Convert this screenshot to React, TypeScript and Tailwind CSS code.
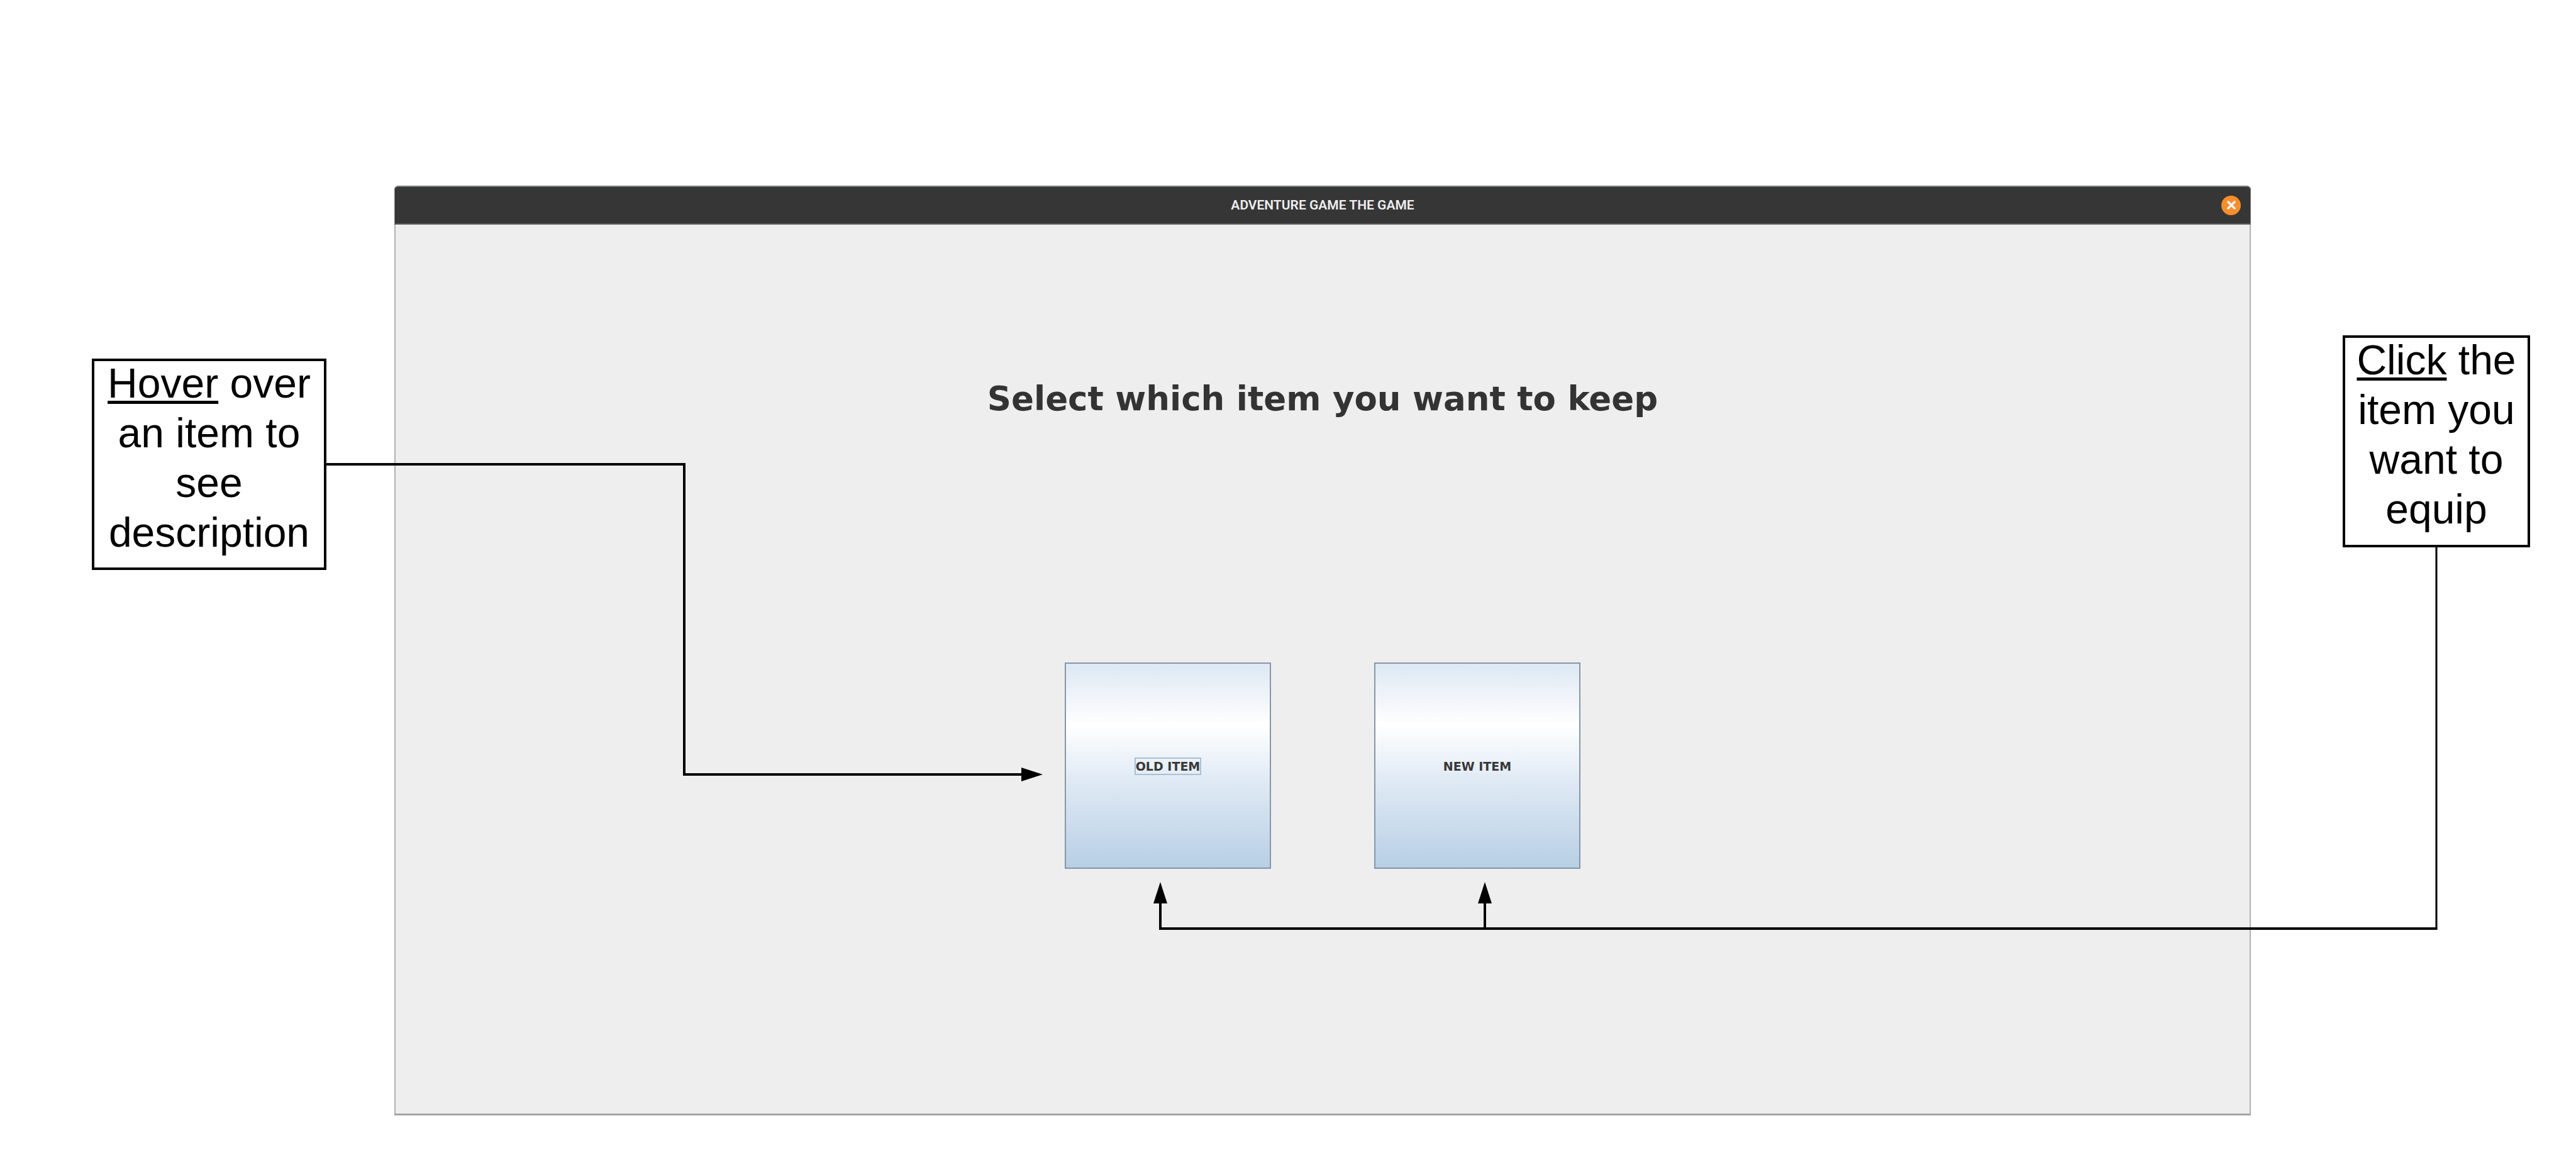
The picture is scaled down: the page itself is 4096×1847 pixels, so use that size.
import React from "react";

type ItemButtonProps = { label: string; focused?: boolean };

function ItemButton({ label, focused = false }: ItemButtonProps) {
  return (
    <button
      type="button"
      className="flex size-[328px] items-center justify-center border-2 border-[#8496a8] bg-[linear-gradient(to_bottom,#dde8f3_0%,#ffffff_30%,#dde8f3_60%,#b8cfe5_100%)] pt-[2px] font-['DejaVu_Sans',sans-serif] text-[19px] leading-[24px] font-bold text-[#383838]"
    >
      <span className={focused ? "outline-2 outline-[#a9bfd4]" : ""}>{label}</span>
    </button>
  );
}

function Note({ className, children }: { className: string; children: React.ReactNode }) {
  return (
    <p
      className={`shrink-0 bg-white text-center font-['Liberation_Sans',Arial,sans-serif] text-[66px] leading-[79px] text-black outline-4 -outline-offset-4 outline-black ${className}`}
    >
      {children}
    </p>
  );
}

function Term({ children }: { children: React.ReactNode }) {
  return <span className="underline decoration-[5px] underline-offset-[5px]">{children}</span>;
}

function Connectors() {
  return (
    <svg
      viewBox="0 0 4096 1847"
      className="pointer-events-none absolute inset-x-0 top-0 w-full"
      aria-hidden="true"
    >
      <g fill="none" stroke="#000" strokeWidth="4">
        <path d="M518 738H1088V1231H1626" />
        <path d="M3874 869V1476" strokeWidth="3" />
        <path d="M3875.5 1476H1845V1434" />
        <path d="M2361 1476V1434" />
      </g>
      <path d="M1624 1220L1658 1231L1624 1242Z" />
      <path d="M1834 1436L1845 1402L1856 1436Z" />
      <path d="M2350 1436L2361 1402L2372 1436Z" />
    </svg>
  );
}

export default function App() {
  return (
    <div className="relative min-h-screen w-full bg-white">
      <div className="flex items-start pr-[73px] pl-[146px]">
        <Note className="mt-[570px] mr-[108px] h-[336px] w-[373px]">
          <span className="block">
            <Term>Hover</Term> over
          </span>
          <span className="block">an item to see description</span>
        </Note>

        <main className="mt-[295px] min-w-0 flex-1">
          <header className="grid h-[62px] grid-cols-[1fr_auto_1fr] items-center rounded-t-[6px] border-x border-t-2 border-b-2 border-x-[#777777] border-t-[#808383] border-b-[#5c5c5c] bg-[#363636] px-[15px]">
            <h1 className="col-start-2 font-[Roboto,sans-serif] text-[21px] leading-[28px] font-semibold text-[#eeeeee]">
              ADVENTURE GAME THE GAME
            </h1>
            <button
              type="button"
              aria-label="Close"
              className="flex size-[31px] items-center justify-center justify-self-end rounded-full bg-[#f68e2b]"
            >
              <svg viewBox="0 0 14 14" className="size-[14px]" aria-hidden="true">
                <path d="M2 2L12 12M12 2L2 12" stroke="#f7f3ee" strokeWidth="3.6" strokeLinecap="round" />
              </svg>
            </button>
          </header>
          <section className="flex flex-col items-center border-x-2 border-b-[3px] border-x-[#b0b0b0] border-b-[#a4a4a4] bg-[#eeeeee] pt-[247px] pb-[389px]">
            <h2 className="font-['DejaVu_Sans',sans-serif] text-[53px] leading-[60px] font-bold text-[#333333]">
              Select which item you want to keep
            </h2>
            <div className="mt-[389px] flex gap-[164px]">
              <ItemButton label="OLD ITEM" focused />
              <ItemButton label="NEW ITEM" />
            </div>
          </section>
        </main>

        <Note className="mt-[533px] ml-[146px] h-[337px] w-[298px]">
          <span className="block">
            <Term>Click</Term> the
          </span>
          <span className="block">item you want to equip</span>
        </Note>
      </div>
      <Connectors />
    </div>
  );
}
